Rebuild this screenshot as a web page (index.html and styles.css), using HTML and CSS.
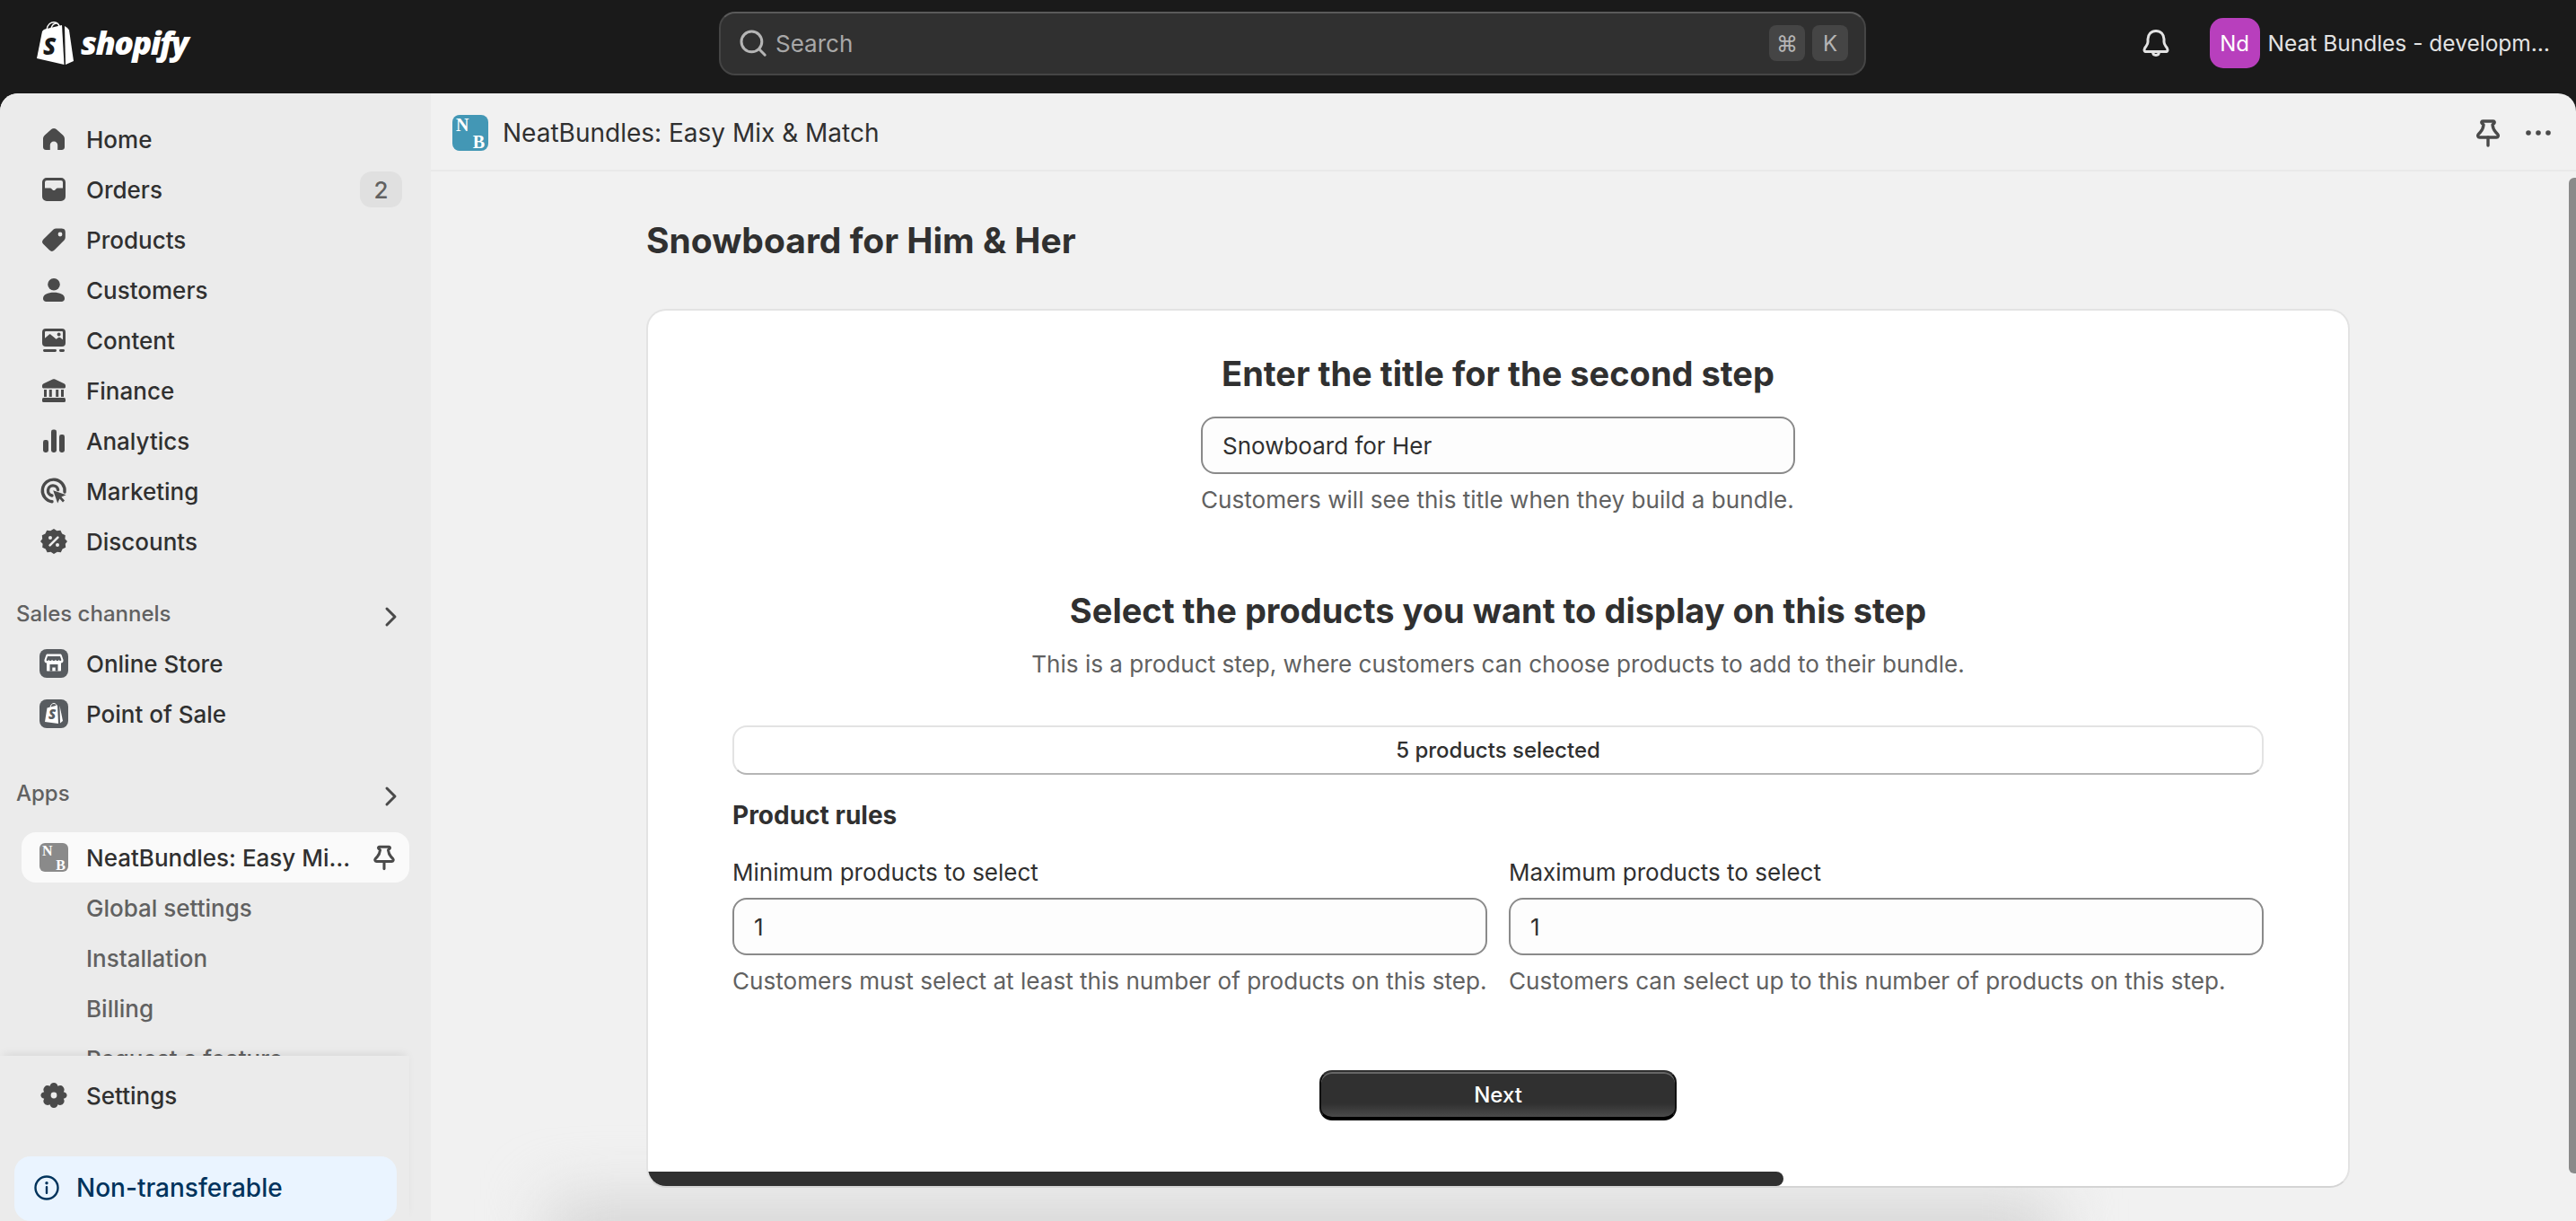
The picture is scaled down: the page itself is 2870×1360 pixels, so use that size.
FILE: index.html
```html
<!DOCTYPE html>
<html lang="en">
<head>
  <meta charset="UTF-8">
  <title>NeatBundles: Easy Mix &amp; Match</title>
  <link rel="stylesheet" href="styles.css">
</head>
<body>
  <header class="topbar">
    <div class="logo">
      <svg class="logo-bag" viewBox="0 0 42 48">
        <path fill="#fff" d="M1 41 7 11Q8 9 10 8.500L29 4 31.500 48Z"/>
        <path fill="#fff" d="M32 5 35 7 37 9.500 42 44 33 48Z"/>
        <path fill="none" stroke="#fff" stroke-width="1.500" d="M12 9C13 3 17 .8 20 .8 24 .8 26 4 26.500 7M17 7.500C18 4 20 2 23 2"/>
        <text x="8" y="37" class="logo-s">S</text>
      </svg>
      <span class="logo-word">shopify</span>
    </div>
    <div class="search">
      <svg class="icon" viewBox="0 0 20 20"><circle cx="9.200" cy="9.200" r="5.700" fill="none" stroke="#b5b5b5" stroke-width="1.500"/><path d="M13.400 13.400 16.600 16.600" stroke="#b5b5b5" stroke-width="1.500" stroke-linecap="round"/></svg>
      <span class="search-text">Search</span>
      <span class="kbd">⌘</span>
      <span class="kbd">K</span>
    </div>
    <div class="account">
      <svg class="icon bell" viewBox="0 0 20 20"><path fill="none" stroke="#e3e3e3" stroke-width="1.500" stroke-linejoin="round" d="M10 3.200c-2.600 0-4.500 2-4.500 4.600v1.600c0 1-.4 1.600-1 2.400-.6.8-1 1.200-1 1.900 0 .7.5 1.100 1.300 1.100h10.400c.8 0 1.300-.4 1.300-1.100 0-.7-.4-1.100-1-1.900-.6-.8-1-1.400-1-2.400V7.800c0-2.600-1.900-4.600-4.500-4.600Z"/><path fill="none" stroke="#e3e3e3" stroke-width="1.500" d="M8.300 15c0 1 .7 1.700 1.700 1.700s1.700-.7 1.700-1.700"/></svg>
      <span class="avatar">Nd</span>
      <span class="store-name">Neat Bundles - developm…</span>
    </div>
  </header>

  <div class="shell">
    <aside class="sidebar">
      <div class="sidebar-scroll">
        <a class="nav-row">
          <svg class="icon" viewBox="0 0 20 20"><path fill="#4a4a4a" d="M10 4c.5 0 1 .2 1.400.5l3.500 3.100c.7.6 1.100 1.400 1.100 2.300v4.600c0 1-.8 1.500-1.600 1.500h-2.300v-2.700c0-1.100-.9-2-2.100-2s-2.100.9-2.100 2v2.700H5.600C4.800 16 4 15.500 4 14.500V9.900c0-.9.4-1.700 1.100-2.300l3.500-3.100C9 4.200 9.500 4 10 4Z"/></svg>
          Home
        </a>
        <a class="nav-row">
          <svg class="icon" viewBox="0 0 20 20"><path fill="#4a4a4a" fill-rule="evenodd" d="M6 3.500h8A2.500 2.500 0 0 1 16.500 6v8a2.500 2.500 0 0 1-2.500 2.500H6A2.500 2.500 0 0 1 3.500 14V6A2.500 2.500 0 0 1 6 3.500ZM5 9.300h3c.3 0 .5.100.7.300l.6.600c.4.400 1 .4 1.400 0l.6-.6c.2-.2.400-.3.700-.3h3V6a1 1 0 0 0-1-1H6a1 1 0 0 0-1 1Z"/></svg>
          Orders
          <span class="badge">2</span>
        </a>
        <a class="nav-row">
          <svg class="icon" viewBox="0 0 20 20"><path fill="#4a4a4a" fill-rule="evenodd" d="M11.300 3.700h3.100a2 2 0 0 1 2 2v3.100c0 .5-.2 1-.6 1.400l-5.500 5.600a2 2 0 0 1-2.800 0l-3.300-3.300a2 2 0 0 1 0-2.800l5.600-5.400c.4-.4.900-.6 1.500-.6ZM13.500 5.800a1.200 1.200 0 1 0 0 2.400 1.200 1.200 0 0 0 0-2.400Z"/></svg>
          Products
        </a>
        <a class="nav-row">
          <svg class="icon" viewBox="0 0 20 20"><circle cx="10" cy="6.900" r="3.400" fill="#4a4a4a"/><path fill="#4a4a4a" d="M4 14.700c0-2.200 2.700-3.300 6-3.300s6 1.100 6 3.300c0 1-.8 1.800-1.700 1.800H5.700C4.800 16.500 4 15.700 4 14.700Z"/></svg>
          Customers
        </a>
        <a class="nav-row">
          <svg class="icon" viewBox="0 0 20 20"><path fill="#4a4a4a" fill-rule="evenodd" d="M5.500 3.500h9a2 2 0 0 1 2 2v6a2 2 0 0 1-2 2h-9a2 2 0 0 1-2-2v-6a2 2 0 0 1 2-2ZM5 8.900l2.300-2c.3-.3.700-.3 1 0l3 2.500 1.200-.9c.3-.2.700-.2 1 0l1.500 1.100V5.500a.5.500 0 0 0-.5-.5h-9a.5.500 0 0 0-.5.500ZM12.800 5.800a1 1 0 1 0 0 2 1 1 0 0 0 0-2Z"/><rect x="4" y="15" width="7.500" height="1.500" rx=".7" fill="#4a4a4a"/><rect x="13" y="15" width="3" height="1.500" rx=".7" fill="#4a4a4a"/></svg>
          Content
        </a>
        <a class="nav-row">
          <svg class="icon" viewBox="0 0 20 20"><path fill="#4a4a4a" d="M9.300 3.800c.4-.2 1-.2 1.400 0l5 2.300c.5.200.8.700.8 1.200v.7c0 .4-.3.700-.7.700H4.200c-.4 0-.7-.3-.7-.7v-.7c0-.5.300-1 .8-1.200Z"/><path fill="#4a4a4a" d="M4.500 9.500H6v4H4.500ZM7.400 9.500h1.500v4H7.400ZM11.100 9.500h1.500v4h-1.500ZM14 9.500h1.500v4H14Z"/><rect x="3.500" y="14" width="13" height="2.500" rx=".8" fill="#4a4a4a"/></svg>
          Finance
        </a>
        <a class="nav-row">
          <svg class="icon" viewBox="0 0 20 20"><rect x="4" y="9.500" width="3" height="7" rx="1.200" fill="#4a4a4a"/><rect x="8.500" y="3.700" width="3" height="12.800" rx="1.200" fill="#4a4a4a"/><rect x="13" y="6.500" width="3" height="10" rx="1.200" fill="#4a4a4a"/></svg>
          Analytics
        </a>
        <a class="nav-row">
          <svg class="icon" viewBox="0 0 20 20"><path fill="none" stroke="#4a4a4a" stroke-width="1.700" stroke-linecap="round" d="M16 10.500A6.200 6.200 0 1 0 9 15.900"/><path fill="none" stroke="#4a4a4a" stroke-width="1.700" stroke-linecap="round" d="M12.300 9.300a2.800 2.800 0 1 0-3.300 3.200"/><path fill="#4a4a4a" d="M9.600 9.600 16.800 12.100 14.200 13.300 16 15.200 15 16.200 13.200 14.300 12.100 16.800Z"/></svg>
          Marketing
        </a>
        <a class="nav-row">
          <svg class="icon" viewBox="0 0 20 20"><path fill="#4a4a4a" d="M10 3l1.700 1.100 2-.2.900 1.800 1.800.9-.2 2L17.500 10l-1.100 1.400.2 2-1.800.9-.9 1.800-2-.2L10 17l-1.700-1.100-2 .2-.9-1.800-1.800-.9.2-2L2.500 10l1.100-1.400-.2-2 1.800-.9.9-1.800 2 .2Z"/><path stroke="#ebebeb" stroke-width="1.300" stroke-linecap="round" d="M12.200 7.800 7.800 12.200"/><circle cx="8" cy="8" r="1" fill="#ebebeb"/><circle cx="12" cy="12" r="1" fill="#ebebeb"/></svg>
          Discounts
        </a>

        <div class="nav-heading nav-heading-sales">
          Sales channels
          <svg class="icon chevron" viewBox="0 0 20 20"><path fill="none" stroke="#4a4a4a" stroke-width="1.500" stroke-linecap="round" stroke-linejoin="round" d="M7.500 5.500 12 10l-4.500 4.500"/></svg>
        </div>
        <a class="nav-row">
          <span class="tile">
            <svg viewBox="0 0 32 32"><path fill="#fff" d="M9 5.500h14c.8 0 1.400.5 1.700 1.200l1.800 5.300c.5 1.800-.8 3.500-2.500 3.500v8c0 .6-.4 1-1 1H9c-.6 0-1-.4-1-1v-8c-1.700 0-3-1.700-2.500-3.500l1.800-5.300C7.600 6 8.200 5.500 9 5.500Z"/><path fill="#585c60" d="M9 8h14l1.300 3.700c.2.800-.4 1.300-1 1.300-.7 0-1.300-.5-1.500-1.300-.3.800-1 1.300-1.900 1.300s-1.600-.5-1.900-1.300c-.4.800-1.100 1.300-2 1.300s-1.600-.5-2-1.300c-.3.800-1 1.300-1.900 1.300s-1.600-.5-1.900-1.300c-.2.800-.8 1.300-1.500 1.300-.6 0-1.200-.5-1-1.300Z"/><path fill="#585c60" d="M11.500 17h9v7.500h-2.800v-4h-3.400v4h-2.800Z"/></svg>
          </span>
          Online Store
        </a>
        <a class="nav-row">
          <span class="tile">
            <svg viewBox="0 0 32 32"><path fill="#fff" d="M6 25 8.500 9.500 20 6.500 21 27Z"/><path fill="#fff" d="M22.500 7 26 24 23 26.500Z"/><path fill="none" stroke="#fff" stroke-width="1" d="M12 9c.5-3 2-4.500 4-4.500s3 1.500 3 3.500"/><text x="10" y="22" class="tile-s">S</text></svg>
          </span>
          Point of Sale
        </a>

        <div class="nav-heading nav-heading-apps">
          Apps
          <svg class="icon chevron" viewBox="0 0 20 20"><path fill="none" stroke="#4a4a4a" stroke-width="1.500" stroke-linecap="round" stroke-linejoin="round" d="M7.500 5.500 12 10l-4.500 4.500"/></svg>
        </div>
        <a class="nav-row nav-active">
          <span class="app-tile"><span>N</span><span>B</span></span>
          <span class="nav-app-name">NeatBundles: Easy Mi…</span>
          <svg class="icon pin-side" viewBox="0 0 20 20"><path fill="none" stroke="#4a4a4a" stroke-width="1.700" stroke-linejoin="round" d="M7 3.500h6c.6 0 .8.700.4 1.100l-.9.900c.2 1.600.7 3 1.700 4l1.200 1.300c.6.700.2 1.700-.7 1.700H5.300c-.9 0-1.300-1-.7-1.700L5.800 9.500c1-1 1.500-2.400 1.700-4l-.9-.9C6.200 4.200 6.400 3.500 7 3.500Z"/><path stroke="#4a4a4a" stroke-width="1.700" stroke-linecap="round" d="M10 12.500v4.500"/></svg>
        </a>
        <a class="nav-row nav-sub">Global settings</a>
        <a class="nav-row nav-sub">Installation</a>
        <a class="nav-row nav-sub">Billing</a>
        <a class="nav-row nav-sub">Request a feature</a>
      </div>
      <div class="sidebar-foot">
        <a class="nav-row">
          <svg class="icon" viewBox="0 0 20 20"><path fill="#4a4a4a" fill-rule="evenodd" d="M10 3c1.200 0 2 .8 2.200 1.900.9-.6 2.100-.6 2.900.3.900.9.900 2 .3 2.900 1.100.2 1.900 1 1.900 1.900s-.8 1.700-1.900 1.900c.6.900.6 2-.3 2.900-.8.900-2 .9-2.900.3-.2 1.100-1 1.900-2.200 1.900s-2-.8-2.200-1.900c-.9.600-2.100.6-2.900-.3-.9-.9-.9-2-.3-2.900C3.500 11.700 2.700 10.900 2.700 10s.8-1.700 1.900-1.900c-.6-.9-.6-2 .3-2.900.8-.9 2-.9 2.900-.3C8 3.800 8.800 3 10 3Zm0 5.300a1.700 1.700 0 1 0 0 3.400 1.700 1.700 0 0 0 0-3.400Z"/></svg>
          Settings
        </a>
        <div class="plan-box">
          <svg class="plan-icon" viewBox="0 0 28 28"><circle cx="14" cy="14" r="12.500" fill="none" stroke="#00335c" stroke-width="2.400"/><circle cx="14" cy="8.700" r="1.700" fill="#00335c"/><rect x="12.800" y="12" width="2.400" height="9" rx="1" fill="#00335c"/></svg>
          Non-transferable
        </div>
      </div>
    </aside>

    <main class="main">
      <div class="appbar">
        <span class="app-tile app-tile-color"><span>N</span><span>B</span></span>
        <span class="app-name">NeatBundles: Easy Mix &amp; Match</span>
        <svg class="icon appbar-pin" viewBox="0 0 20 20"><path fill="none" stroke="#4a4a4a" stroke-width="1.700" stroke-linejoin="round" d="M7 3.500h6c.6 0 .8.700.4 1.100l-.9.900c.2 1.600.7 3 1.700 4l1.200 1.300c.6.700.2 1.700-.7 1.700H5.300c-.9 0-1.300-1-.7-1.700L5.800 9.500c1-1 1.500-2.400 1.700-4l-.9-.9C6.200 4.200 6.400 3.500 7 3.500Z"/><path stroke="#4a4a4a" stroke-width="1.700" stroke-linecap="round" d="M10 12.500v4.500"/></svg>
        <svg class="icon" viewBox="0 0 20 20"><circle cx="4.500" cy="10" r="1.400" fill="#4a4a4a"/><circle cx="10" cy="10" r="1.400" fill="#4a4a4a"/><circle cx="15.500" cy="10" r="1.400" fill="#4a4a4a"/></svg>
      </div>

      <div class="page">
        <h1>Snowboard for Him &amp; Her</h1>
        <section class="card">
          <div class="step-title">
            <h2>Enter the title for the second step</h2>
            <div class="title-field">
              <input type="text" class="text-input" value="Snowboard for Her">
              <p class="help">Customers will see this title when they build a bundle.</p>
            </div>
          </div>

          <h2 class="products-heading">Select the products you want to display on this step</h2>
          <p class="help products-sub">This is a product step, where customers can choose products to add to their bundle.</p>

          <button type="button" class="select-btn">5 products selected</button>

          <h3>Product rules</h3>
          <div class="rules">
            <div>
              <label for="min">Minimum products to select</label>
              <input type="text" id="min" class="text-input" value="1">
              <p class="help">Customers must select at least this number of products on this step.</p>
            </div>
            <div>
              <label for="max">Maximum products to select</label>
              <input type="text" id="max" class="text-input" value="1">
              <p class="help">Customers can select up to this number of products on this step.</p>
            </div>
          </div>

          <button type="button" class="next-btn">Next</button>
          <div class="card-scroll"></div>
        </section>
      </div>
      <div class="page-glow"></div>
      <div class="page-scroll"></div>
    </main>
  </div>
</body>
</html>
```
FILE: styles.css
```css
* {
  box-sizing: border-box;
}
html, body {
  height: 1360px;
  overflow: hidden;
}
body {
  margin: 0;
  display: flex;
  flex-direction: column;
  background-color: #1a1a1a;
  color: #303030;
  font-family: Inter, "Noto Sans", sans-serif;
  font-size: 26px;
}
.icon {
  width: 40px;
  height: 40px;
  flex: none;
}

/* top bar */
.topbar {
  height: 104px;
  flex: none;
  display: flex;
  align-items: center;
  padding: 0 29px 8px 40px;
}
.logo {
  width: 761px;
  display: flex;
  align-items: center;
  gap: 8px;
}
.logo-bag {
  width: 42px;
  height: 48px;
}
.logo-s {
  font-family: "Open Sans", sans-serif;
  font-weight: 800;
  font-style: italic;
  font-size: 26px;
  fill: #1a1a1a;
}
.logo-word {
  color: #fff;
  font-family: "Open Sans", sans-serif;
  font-weight: 800;
  font-style: italic;
  font-size: 36px;
  letter-spacing: -1.600px;
  line-height: 48px;
}
.search {
  width: 1278px;
  height: 71px;
  display: flex;
  align-items: center;
  gap: 8px;
  padding: 0 18px 0 16px;
  background-color: #303030;
  border: 2px solid #454545;
  border-top-color: #5a5a5a;
  border-radius: 18px;
  color: #a8a8a8;
}
.search-text {
  flex: 1;
  margin-left: -3px;
}
.kbd {
  width: 40px;
  height: 40px;
  display: flex;
  align-items: center;
  justify-content: center;
  background-color: #454545;
  border-radius: 8px;
  font-size: 24px;
  color: #b5b5b5;
}
.account {
  margin-left: auto;
  display: flex;
  align-items: center;
  color: #e3e3e3;
}
.bell {
  margin-right: 40px;
}
.avatar {
  width: 56px;
  height: 56px;
  display: flex;
  align-items: center;
  justify-content: center;
  background-color: #b83fbd;
  border-radius: 15px;
  color: #fff;
  font-size: 24px;
  margin-right: 9px;
}
.store-name {
  white-space: nowrap;
  font-size: 24.500px;
}

/* shell */
.shell {
  flex: 1;
  display: flex;
  min-height: 0;
  background-color: #f1f1f1;
  border-radius: 20px 20px 0 0;
  overflow: hidden;
}

/* sidebar */
.sidebar {
  width: 480px;
  flex: none;
  display: flex;
  flex-direction: column;
  background-color: #ebebeb;
}
.sidebar-scroll {
  flex: 1;
  min-height: 0;
  overflow: hidden;
  padding-top: 23px;
}
.nav-row {
  height: 56px;
  width: 432px;
  margin-left: 24px;
  display: flex;
  align-items: center;
  gap: 16px;
  padding: 0 8px 0 16px;
  font-weight: 500;
  white-space: nowrap;
}
.badge {
  margin-left: auto;
  width: 47px;
  height: 40px;
  display: flex;
  align-items: center;
  justify-content: center;
  background-color: #e0e0e0;
  border-radius: 13px;
  color: #616161;
  font-weight: 450;
}
.nav-heading {
  height: 56px;
  display: flex;
  align-items: center;
  justify-content: space-between;
  padding: 0 24px 0 18px;
  color: #616161;
  font-size: 24px;
  font-weight: 500;
}
.nav-heading-sales {
  margin-top: 24px;
}
.nav-heading-apps {
  margin-top: 32px;
  margin-bottom: 16px;
}
.chevron {
  margin-top: 8px;
}
.tile {
  width: 32px;
  height: 32px;
  margin: 0 4px;
  flex: none;
  background-color: #585c60;
  border-radius: 8px;
  display: flex;
}
.tile-s {
  font-family: "Open Sans", sans-serif;
  font-weight: 800;
  font-style: italic;
  font-size: 15px;
  fill: #585c60;
}
.app-tile {
  width: 32px;
  height: 32px;
  margin: 0 4px;
  padding: 1px 3px 0;
  flex: none;
  display: grid;
  grid-template-rows: 1fr 1fr;
  background-color: #8a8a8a;
  border-radius: 6px;
  color: #fff;
  font-family: "Liberation Serif", serif;
  font-size: 16px;
  font-weight: 700;
  line-height: 15px;
}
.app-tile span:last-child {
  justify-self: end;
}
.nav-active {
  background-color: #fafafa;
  border-radius: 16px;
  padding-right: 10px;
}
.nav-app-name {
  flex: 1;
}
.pin-side {
  width: 36px;
  height: 36px;
}
.nav-sub {
  padding-left: 72px;
  color: #616161;
  font-weight: 450;
}
.sidebar-foot {
  position: relative;
  width: 456px;
  flex: none;
  padding-top: 16px;
  background-color: #ebebeb;
  box-shadow: 0 -5px 10px -4px rgba(0, 0, 0, 0.1);
}
.plan-box {
  width: 426px;
  height: 72px;
  margin: 40px 0 0 16px;
  display: flex;
  align-items: center;
  gap: 19px;
  padding: 0 0 2px 22px;
  background-color: #eaf4ff;
  border-radius: 18px;
  color: #00335c;
  font-size: 28px;
  font-weight: 500;
}
.plan-icon {
  width: 28px;
  height: 28px;
}

/* main */
.main {
  flex: 1;
  min-width: 0;
  position: relative;
  overflow: hidden;
}
.appbar {
  height: 87px;
  display: flex;
  align-items: center;
  padding: 3px 22px 0 24px;
  border-bottom: 2px solid #e9e9e9;
}
.app-tile-color {
  width: 40px;
  height: 40px;
  margin: 0 16px 0 0;
  padding: 2px 4px 0;
  background-color: #4397b5;
  border-radius: 8px;
  font-size: 20px;
  line-height: 18px;
}
.app-name {
  flex: 1;
  font-size: 28px;
}
.appbar-pin {
  margin-right: 16px;
}
.page {
  position: relative;
  z-index: 1;
  width: 1898px;
  margin-left: 240px;
  padding-top: 53px;
}
h1 {
  margin: 0 0 52px;
  font-size: 39px;
  font-weight: 650;
  line-height: 48px;
}
.card {
  position: relative;
  height: 979px;
  padding: 46px 94px 0;
  background-color: #fff;
  border: 2px solid #e3e3e3;
  border-bottom-color: #d4d4d4;
  border-radius: 22px;
  overflow: hidden;
}
h2 {
  margin: 0;
  font-size: 38px;
  font-weight: 650;
  line-height: 48px;
  text-align: center;
}
.step-title {
  display: flex;
  flex-direction: column;
  align-items: center;
}
.title-field {
  width: 662px;
  margin-top: 24px;
}
.text-input {
  width: 100%;
  height: 64px;
  display: block;
  padding: 0 22px;
  background-color: #fdfdfd;
  border: 2px solid #8a8a8a;
  border-radius: 16px;
  color: #303030;
  font-family: Inter, "Noto Sans", sans-serif;
  font-size: 26px;
}
.help {
  margin: 11px 0 0;
  color: #616161;
  font-size: 26.100px;
  line-height: 36px;
  white-space: nowrap;
}
.products-heading {
  margin-top: 81px;
}
.products-sub {
  margin-top: 18px;
  text-align: center;
}
.select-btn {
  width: 100%;
  height: 55px;
  display: block;
  margin-top: 50px;
  background-color: #fff;
  border: 2px solid #e3e3e3;
  border-bottom-color: #b5b5b5;
  border-radius: 16px;
  color: #303030;
  font-family: Inter, "Noto Sans", sans-serif;
  font-size: 24px;
  font-weight: 550;
}
h3 {
  margin: 27px 0 0;
  font-size: 28px;
  font-weight: 650;
  line-height: 36px;
}
.rules {
  display: grid;
  grid-template-columns: minmax(0, 1fr) minmax(0, 1fr);
  gap: 24px;
  margin-top: 28px;
}
.rules label {
  display: block;
  margin-bottom: 10px;
  font-size: 26px;
  line-height: 36px;
}
.next-btn {
  width: 398px;
  height: 56px;
  display: block;
  margin: 81px auto 0;
  background: linear-gradient(#303030 70%, #4a4a4a);
  border: 2px solid #111;
  border-top-color: #303030;
  border-bottom: 4px solid #000;
  border-radius: 14px;
  box-shadow: inset 0 2px 0 #666;
  color: #fff;
  font-family: Inter, "Noto Sans", sans-serif;
  font-size: 24px;
  font-weight: 550;
}
.card-scroll {
  position: absolute;
  left: 0;
  bottom: 0;
  width: 1265px;
  height: 16px;
  background-color: #303030;
  border-radius: 0 8px 8px 0;
}
.page-glow {
  position: absolute;
  left: 130px;
  bottom: -70px;
  width: 1680px;
  height: 95px;
  background-color: #d6d6d6;
  filter: blur(34px);
}
.page-scroll {
  position: absolute;
  z-index: 2;
  top: 94px;
  right: 0;
  width: 8px;
  height: 1109px;
  background-color: #8a8a8a;
  border-radius: 6px 0 0 6px;
}
```
